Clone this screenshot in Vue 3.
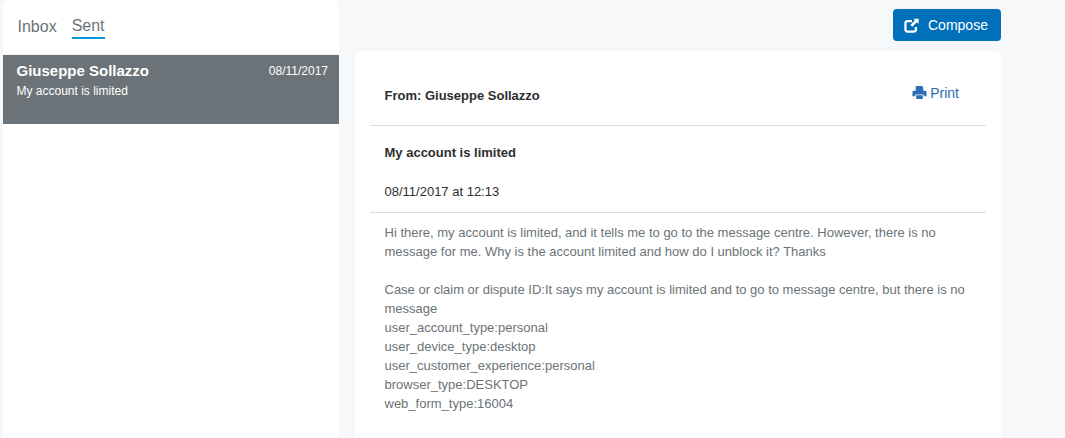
<script setup>
const bodyLines = [
  'Hi there, my account is limited, and it tells me to go to the message centre. However, there is no message for me. Why is the account limited and how do I unblock it? Thanks',
]
const details = [
  'Case or claim or dispute ID:It says my account is limited and to go to message centre, but there is no message',
  'user_account_type:personal',
  'user_device_type:desktop',
  'user_customer_experience:personal',
  'browser_type:DESKTOP',
  'web_form_type:16004',
]
</script>

<template>
  <div class="page">
    <aside class="sidebar">
      <nav class="tabs">
        <span class="tab inbox">Inbox</span>
        <span class="tab active">Sent</span>
      </nav>
      <div class="item">
        <div class="item-top">
          <strong class="item-name">Giuseppe Sollazzo</strong>
          <span class="item-date">08/11/2017</span>
        </div>
        <div class="item-subject">My account is limited</div>
      </div>
    </aside>
    <section class="content">
      <div class="toolbar">
        <button class="compose">
          <svg class="compose-icon" viewBox="0 0 16 16" width="15" height="15">
            <path d="M8.5 3.2H3.6A2.1 2.1 0 0 0 1.5 5.3v7a2.1 2.1 0 0 0 2.1 2.1h7a2.1 2.1 0 0 0 2.1-2.1V9.6" fill="none" stroke="#fff" stroke-width="2.4"/>
            <path d="M10 .8h5.6v5.6l-1.9-1.9-4.9 4.9-2-2 4.9-4.9z" fill="#fff"/>
          </svg>
          Compose
        </button>
      </div>
      <article class="message">
        <header class="msg-head">
          <strong class="from">From: Giuseppe Sollazzo</strong>
          <span class="print">
            <svg viewBox="0 0 16 16" width="15" height="15">
              <path d="M4 1h6.5L12 2.5V6H4zM0.5 7.5A1.5 1.5 0 0 1 2 6h12a1.5 1.5 0 0 1 1.5 1.5V12H12.5v-2h-9v2H.5zM4.5 11h7v4h-7z" fill="#2c6db1"/>
            </svg>
            Print
          </span>
        </header>
        <div class="msg-meta">
          <strong class="subject">My account is limited</strong>
          <div class="date">08/11/2017 at 12:13</div>
        </div>
        <div class="msg-body">
          <p v-for="l in bodyLines" :key="l">{{ l }}</p>
          <div class="spacer"></div>
          <p v-for="d in details" :key="d">{{ d }}</p>
        </div>
      </article>
    </section>
  </div>
</template>

<style>
html, body { margin: 0; background: #f7f8fa; }
</style>

<style scoped>
.page {
  display: flex;
  gap: 16px;
  height: 438px;
  padding-left: 3px;
  overflow: hidden;
  font-family: "Liberation Sans", Arial, sans-serif;
  box-sizing: border-box;
}
.sidebar {
  width: 336px;
  flex: none;
  background: #fff;
  border-radius: 6px 6px 0 0;
}
.tabs {
  display: flex;
  gap: 15px;
  height: 55px;
  padding: 16px 0 0 14.5px;
  box-sizing: border-box;
  border-bottom: 1px solid #eceef0;
}
.tab {
  height: 21px;
  font-size: 16px;
  line-height: 19px;
  color: #6c7378;
}
.tab.inbox {
  padding-top: 1px;
}
.tab.active {
  border-bottom: 2px solid #009cde;
}
.item {
  height: 69px;
  background: #6c7378;
  color: #fff;
  padding: 7px 11px 0 13.5px;
  box-sizing: border-box;
}
.item-top {
  display: flex;
  justify-content: space-between;
}
.item-name {
  font-size: 15px;
  line-height: 17px;
}
.item-date {
  font-size: 12px;
  line-height: 14px;
  margin-top: 2px;
}
.item-subject {
  font-size: 12px;
  line-height: 14px;
  margin-top: 5px;
}
.content {
  width: 646px;
  flex: none;
}
.toolbar {
  display: flex;
  justify-content: flex-end;
  padding-top: 9px;
  height: 51px;
  box-sizing: border-box;
}
.compose {
  display: flex;
  align-items: center;
  gap: 9px;
  width: 108px;
  height: 32px;
  padding: 0 0 0 11px;
  border: 0;
  border-radius: 4px;
  background: #0070ba;
  color: #fff;
  font: 14px "Liberation Sans", Arial, sans-serif;
}
.compose-icon { flex: none; }
.message {
  background: #fff;
  border-radius: 6px 6px 0 0;
  padding: 0 15px;
  height: 387px;
}
.msg-head {
  display: flex;
  justify-content: space-between;
  height: 75px;
  box-sizing: border-box;
  padding: 36px 27px 0 14.5px;
  border-bottom: 1px solid #dedede;
}
.from {
  font-size: 13px;
  line-height: 18px;
  color: #2c2e2f;
  font-weight: 700;
}
.print {
  display: flex;
  align-items: flex-start;
  gap: 3px;
  margin: -3px 0 0;
  font-size: 14px;
  line-height: 19px;
  color: #2c6db1;
}
.print svg { margin-top: 1px; }
.msg-meta {
  height: 87px;
  box-sizing: border-box;
  padding: 18px 14.5px 0;
  border-bottom: 1px solid #dedede;
}
.subject {
  display: block;
  font-size: 13px;
  line-height: 18px;
  color: #2c2e2f;
}
.date {
  margin-top: 21px;
  font-size: 13px;
  line-height: 18px;
  color: #2c2e2f;
}
.msg-body {
  padding: 10px 14.5px 0;
  font-size: 13px;
  line-height: 19px;
  color: #6c7378;
}
.msg-body p { margin: 0; }
.spacer { height: 19px; }
</style>
